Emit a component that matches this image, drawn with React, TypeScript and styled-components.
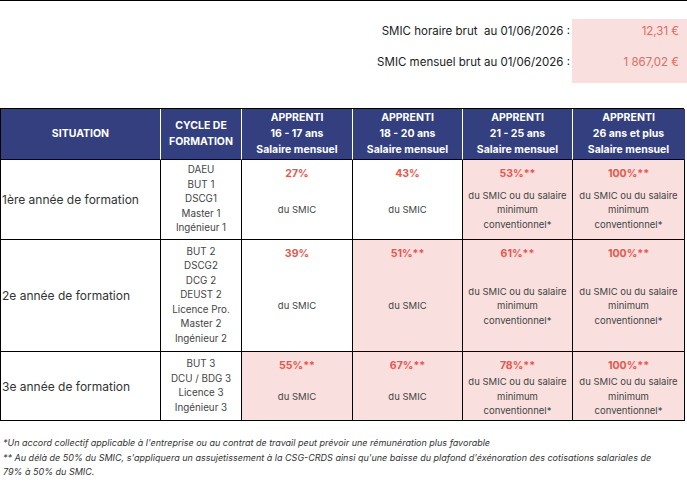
import React from 'react';
import styled, { createGlobalStyle } from 'styled-components';

interface Rate {
  pct: string;
  note: string;
  highlight: boolean;
}

interface Row {
  situation: string;
  cycles: string[];
  height: number;
  rates: Rate[];
}

const SMIC = 'du SMIC';
const CONV = 'du SMIC ou du salaire minimum conventionnel*';

const rows: Row[] = [
  {
    situation: '1ère année de formation',
    cycles: ['DAEU', 'BUT 1', 'DSCG1', 'Master 1', 'Ingénieur 1'],
    height: 80,
    rates: [
      { pct: '27%', note: SMIC, highlight: false },
      { pct: '43%', note: SMIC, highlight: false },
      { pct: '53%**', note: CONV, highlight: true },
      { pct: '100%**', note: CONV, highlight: true },
    ],
  },
  {
    situation: '2e année de formation',
    cycles: ['BUT 2', 'DSCG2', 'DCG 2', 'DEUST 2', 'Licence Pro.', 'Master 2', 'Ingénieur 2'],
    height: 112,
    rates: [
      { pct: '39%', note: SMIC, highlight: false },
      { pct: '51%**', note: SMIC, highlight: true },
      { pct: '61%**', note: CONV, highlight: true },
      { pct: '100%**', note: CONV, highlight: true },
    ],
  },
  {
    situation: '3e année de formation',
    cycles: ['BUT 3', 'DCU / BDG 3', 'Licence 3', 'Ingénieur 3'],
    height: 69,
    rates: [
      { pct: '55%**', note: SMIC, highlight: true },
      { pct: '67%**', note: SMIC, highlight: true },
      { pct: '78%**', note: CONV, highlight: true },
      { pct: '100%**', note: CONV, highlight: true },
    ],
  },
];

const headers = [
  ['SITUATION'],
  ['CYCLE DE', 'FORMATION'],
  ['APPRENTI', '16 - 17 ans', 'Salaire mensuel'],
  ['APPRENTI', '18 - 20 ans', 'Salaire mensuel'],
  ['APPRENTI', '21 - 25 ans', 'Salaire mensuel'],
  ['APPRENTI', '26 ans et plus', 'Salaire mensuel'],
];

const GlobalStyle = createGlobalStyle`
  html, body {
    margin: 0;
    padding: 0;
    background: #fff;
  }
  body {
    font-family: Inter, "Noto Sans", Arial, sans-serif;
    color: #333;
    overflow: hidden;
  }
`;

const Page = styled.div`
  width: 687px;
  height: 489px;
  border-top: 1px solid #000;
  box-sizing: border-box;
  overflow: hidden;
`;

const SmicBlock = styled.div`
  display: flex;
  justify-content: flex-end;
  margin-top: 18px;
`;

const SmicColumn = styled.div<{ $boxed?: boolean }>`
  display: flex;
  flex-direction: column;
  gap: 7px;
  height: 64px;
  box-sizing: border-box;
  align-items: flex-end;
  width: ${(p) => (p.$boxed ? '115px' : 'auto')};
  padding-right: ${(p) => (p.$boxed ? '8px' : '2px')};
  background: ${(p) => (p.$boxed ? '#f9e0de' : 'transparent')};
`;

const SmicLine = styled.div<{ $value?: boolean }>`
  height: 24px;
  line-height: 24px;
  font-size: 11.5px;
  white-space: pre;
  color: ${(p) => (p.$value ? '#e26a5f' : '#222')};
`;

const Grid = styled.div`
  margin-top: 25px;
  width: 684px;
  display: grid;
  grid-template-columns: 160px 81px 111px 110px 110px 112px;
  border-top: 1px solid #000;
  border-left: 1px solid #000;
  box-sizing: border-box;
`;

const HeadCell = styled.div<{ $last?: boolean }>`
  height: 51px;
  box-sizing: border-box;
  background: #333f7f;
  color: #fff;
  font-weight: 700;
  font-size: 10.5px;
  line-height: 16px;
  text-align: center;
  display: flex;
  flex-direction: column;
  justify-content: center;
  border-bottom: 1px solid #000;
  border-right: 1px solid ${(p) => (p.$last ? '#333f7f' : '#fff')};
`;

const Cell = styled.div<{ $h: number; $pink?: boolean }>`
  height: ${(p) => p.$h}px;
  box-sizing: border-box;
  border-right: 1px solid #000;
  border-bottom: 1px solid #000;
  background: ${(p) => (p.$pink ? '#f9e0de' : '#fff')};
`;

const SituationCell = styled(Cell)`
  display: flex;
  align-items: center;
  padding-left: 1px;
  font-size: 12px;
  color: #333;
`;

const CycleCell = styled(Cell)`
  display: flex;
  flex-direction: column;
  justify-content: center;
  align-items: center;
  font-size: 9.8px;
  line-height: 14.5px;
  color: #444;
`;

const RateCell = styled(Cell)`
  display: flex;
  flex-direction: column;
  align-items: center;
  text-align: center;
  padding: 6px 3px 0;
`;

const Pct = styled.div`
  font-weight: 700;
  font-size: 10.5px;
  line-height: 16px;
  color: #e5574d;
`;

const Note = styled.div`
  flex: 1;
  display: flex;
  align-items: center;
  justify-content: center;
  font-size: 9.5px;
  line-height: 14.5px;
  color: #444;
`;

const Footnotes = styled.div`
  margin-top: 15px;
  padding: 0 24px 0 3px;
  font-style: italic;
  font-size: 9px;
  line-height: 14.5px;
  color: #333;
`;

export default function App() {
  return (
    <>
      <GlobalStyle />
      <Page>
        <SmicBlock>
          <SmicColumn>
            <SmicLine>{'SMIC horaire brut  au 01/06/2026 :'}</SmicLine>
            <SmicLine>SMIC mensuel brut au 01/06/2026 :</SmicLine>
          </SmicColumn>
          <SmicColumn $boxed>
            <SmicLine $value>12,31 €</SmicLine>
            <SmicLine $value>1 867,02 €</SmicLine>
          </SmicColumn>
        </SmicBlock>

        <Grid>
          {headers.map((lines, i) => (
            <HeadCell key={i} $last={i === headers.length - 1}>
              {lines.map((l) => (
                <div key={l}>{l}</div>
              ))}
            </HeadCell>
          ))}
          {rows.map((row) => (
            <React.Fragment key={row.situation}>
              <SituationCell $h={row.height}>{row.situation}</SituationCell>
              <CycleCell $h={row.height}>
                {row.cycles.map((c) => (
                  <div key={c}>{c}</div>
                ))}
              </CycleCell>
              {row.rates.map((r, i) => (
                <RateCell key={i} $h={row.height} $pink={r.highlight}>
                  <Pct>{r.pct}</Pct>
                  <Note>{r.note}</Note>
                </RateCell>
              ))}
            </React.Fragment>
          ))}
        </Grid>

        <Footnotes>
          <div>*Un accord collectif applicable à l'entreprise ou au contrat de travail peut prévoir une rémunération plus favorable</div>
          <div>
            ** Au délà de 50% du SMIC, s'appliquera un assujetissement à la CSG-CRDS ainsi qu'une baisse du plafond d'éxénoration des cotisations salariales de 79% à 50% du SMIC.
          </div>
        </Footnotes>
      </Page>
    </>
  );
}
